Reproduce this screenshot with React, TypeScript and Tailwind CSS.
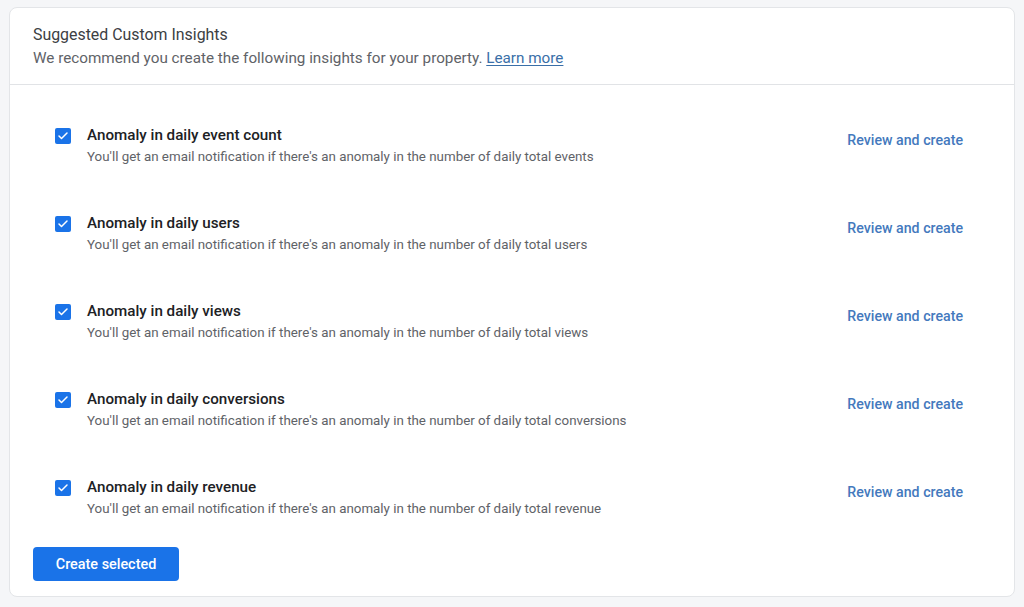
import { Check } from "lucide-react";

const insights = [
  { title: "Anomaly in daily event count", what: "events" },
  { title: "Anomaly in daily users", what: "users" },
  { title: "Anomaly in daily views", what: "views" },
  { title: "Anomaly in daily conversions", what: "conversions" },
  { title: "Anomaly in daily revenue", what: "revenue" },
];

export default function App() {
  return (
    <div className="min-h-[607px] w-[1024px] bg-[#f5f6f8] px-[9px] pt-[7px] pb-[10px] font-['Roboto',sans-serif]">
      <div className="rounded-[8px] border border-[#e3e5e8] bg-white">
        {/* header */}
        <div className="border-b border-[#e1e3e6] px-[23px] pt-[16px] pb-[15px]">
          <h2 className="text-[15.9px] leading-[21px] text-[#3c4043]">
            Suggested Custom Insights
          </h2>
          <p className="mt-[3px] text-[15.25px] leading-[21px] text-[#5f6368]">
            We recommend you create the following insights for your property.{" "}
            <a className="text-[#3a6fa8] underline underline-offset-2">Learn more</a>
          </p>
        </div>

        {/* rows */}
        <div className="flex flex-col gap-[46px] px-[23px] pt-[40px]">
          {insights.map((item) => (
            <div key={item.title} className="flex items-start pl-[22px] pr-[28px]">
              <div className="mt-[3px] flex h-[16px] w-[16px] items-center justify-center rounded-[2px] bg-[#1a73e8]">
                <Check className="h-[12px] w-[12px] text-white" strokeWidth={3} />
              </div>
              <div className="ml-[16px] flex-1">
                <div className="text-[15.2px] font-medium leading-[21px] text-[#202124]">
                  {item.title}
                </div>
                <div className="text-[13.35px] leading-[21px] text-[#5f6368]">
                  You'll get an email notification if there's an anomaly in the number of daily total {item.what}
                </div>
              </div>
              <a className="mt-[6px] text-[14.2px] font-medium leading-[18px] text-[#4479bd]">
                Review and create
              </a>
            </div>
          ))}
        </div>

        <div className="px-[23px] pt-[28px] pb-[15px]">
          <button className="h-[34px] w-[146px] rounded-[4px] bg-[#1a73e8] pt-[1px] text-[14.4px] font-medium text-white">
            Create selected
          </button>
        </div>
      </div>
    </div>
  );
}
